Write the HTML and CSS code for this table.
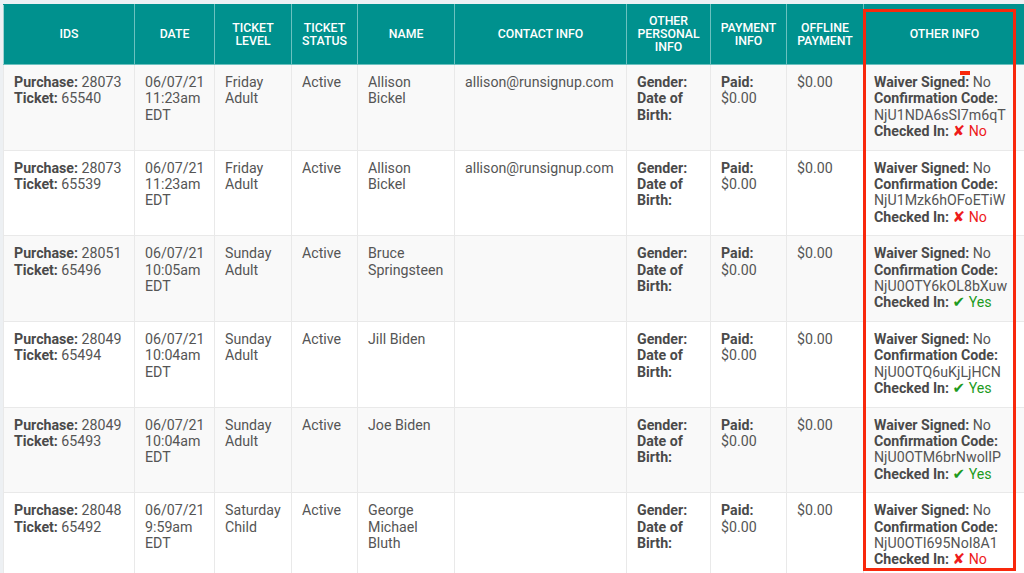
FILE: index.html
```html
<!DOCTYPE html>
<html>
<head>
<meta charset="utf-8">
<link rel="stylesheet" href="styles.css">
</head>
<body>
<div class="page">
<table class="grid">
  <colgroup>
    <col class="c-ids"><col class="c-date"><col class="c-level"><col class="c-status"><col class="c-name"><col class="c-contact"><col class="c-personal"><col class="c-pay"><col class="c-offline"><col class="c-other">
  </colgroup>
  <thead>
    <tr>
      <th>IDS</th><th>DATE</th><th>TICKET LEVEL</th><th>TICKET STATUS</th><th>NAME</th><th>CONTACT INFO</th><th>OTHER PERSONAL INFO</th><th>PAYMENT INFO</th><th>OFFLINE PAYMENT</th><th>OTHER INFO</th>
    </tr>
  </thead>
  <tbody>
    <tr>
      <td><div class="nw"><b>Purchase:</b> 28073</div><div class="nw"><b>Ticket:</b> 65540</div></td>
      <td>06/07/21 11:23am EDT</td>
      <td>Friday Adult</td>
      <td>Active</td>
      <td>Allison Bickel</td>
      <td>allison@runsignup.com</td>
      <td><b>Gender:</b><br><b>Date of Birth:</b></td>
      <td><b>Paid:</b> $0.00</td>
      <td>$0.00</td>
      <td><b>Waiver Signed:</b> No<br><b>Confirmation Code:</b><br>NjU1NDA6sSI7m6qT<br><b>Checked In:</b> <span class="no"><span class="glyph">✘</span> No</span></td>
    </tr>
    <tr>
      <td><div class="nw"><b>Purchase:</b> 28073</div><div class="nw"><b>Ticket:</b> 65539</div></td>
      <td>06/07/21 11:23am EDT</td>
      <td>Friday Adult</td>
      <td>Active</td>
      <td>Allison Bickel</td>
      <td>allison@runsignup.com</td>
      <td><b>Gender:</b><br><b>Date of Birth:</b></td>
      <td><b>Paid:</b> $0.00</td>
      <td>$0.00</td>
      <td><b>Waiver Signed:</b> No<br><b>Confirmation Code:</b><br>NjU1Mzk6hOFoETiW<br><b>Checked In:</b> <span class="no"><span class="glyph">✘</span> No</span></td>
    </tr>
    <tr>
      <td><div class="nw"><b>Purchase:</b> 28051</div><div class="nw"><b>Ticket:</b> 65496</div></td>
      <td>06/07/21 10:05am EDT</td>
      <td>Sunday Adult</td>
      <td>Active</td>
      <td>Bruce Springsteen</td>
      <td></td>
      <td><b>Gender:</b><br><b>Date of Birth:</b></td>
      <td><b>Paid:</b> $0.00</td>
      <td>$0.00</td>
      <td><b>Waiver Signed:</b> No<br><b>Confirmation Code:</b><br>NjU0OTY6kOL8bXuw<br><b>Checked In:</b> <span class="yes"><span class="glyph">✔</span> Yes</span></td>
    </tr>
    <tr>
      <td><div class="nw"><b>Purchase:</b> 28049</div><div class="nw"><b>Ticket:</b> 65494</div></td>
      <td>06/07/21 10:04am EDT</td>
      <td>Sunday Adult</td>
      <td>Active</td>
      <td>Jill Biden</td>
      <td></td>
      <td><b>Gender:</b><br><b>Date of Birth:</b></td>
      <td><b>Paid:</b> $0.00</td>
      <td>$0.00</td>
      <td><b>Waiver Signed:</b> No<br><b>Confirmation Code:</b><br>NjU0OTQ6uKjLjHCN<br><b>Checked In:</b> <span class="yes"><span class="glyph">✔</span> Yes</span></td>
    </tr>
    <tr>
      <td><div class="nw"><b>Purchase:</b> 28049</div><div class="nw"><b>Ticket:</b> 65493</div></td>
      <td>06/07/21 10:04am EDT</td>
      <td>Sunday Adult</td>
      <td>Active</td>
      <td>Joe Biden</td>
      <td></td>
      <td><b>Gender:</b><br><b>Date of Birth:</b></td>
      <td><b>Paid:</b> $0.00</td>
      <td>$0.00</td>
      <td><b>Waiver Signed:</b> No<br><b>Confirmation Code:</b><br>NjU0OTM6brNwolIP<br><b>Checked In:</b> <span class="yes"><span class="glyph">✔</span> Yes</span></td>
    </tr>
    <tr>
      <td><div class="nw"><b>Purchase:</b> 28048</div><div class="nw"><b>Ticket:</b> 65492</div></td>
      <td>06/07/21 9:59am EDT</td>
      <td>Saturday Child</td>
      <td>Active</td>
      <td>George Michael Bluth</td>
      <td></td>
      <td><b>Gender:</b><br><b>Date of Birth:</b></td>
      <td><b>Paid:</b> $0.00</td>
      <td>$0.00</td>
      <td><b>Waiver Signed:</b> No<br><b>Confirmation Code:</b><br>NjU0OTI695NoI8A1<br><b>Checked In:</b> <span class="no"><span class="glyph">✘</span> No</span></td>
    </tr>
  </tbody>
</table>
<div class="highlight"></div>
<div class="marker"></div>
</div>
</body>
</html>
```

FILE: styles.css
```css
html, body {
  margin: 0;
  padding: 0;
  background: #edf0f3;
  overflow: hidden;
}
.page {
  position: relative;
  width: 1024px;
  height: 573px;
  overflow: hidden;
  padding: 4px 0 0 3px;
  box-sizing: border-box;
}
.grid {
  border-collapse: collapse;
  table-layout: fixed;
  width: 1022px;
  font-family: Roboto, "Liberation Sans", sans-serif;
  font-size: 14.2px;
  color: #555;
}
.c-ids { width: 131px; }
.c-date { width: 80px; }
.c-level { width: 77px; }
.c-status { width: 66px; }
.c-name { width: 97px; }
.c-contact { width: 172px; }
.c-personal { width: 84px; }
.c-pay { width: 76px; }
.c-offline { width: 77px; }
.c-other { width: 162px; }

.grid th {
  background: #00918e;
  color: #fff;
  font-size: 12.3px;
  font-weight: 500;
  line-height: 13px;
  height: 39px;
  padding: 10px 5px;
  text-align: center;
  vertical-align: middle;
  border: 1px solid #6cc1bf;
  border-top: 1px solid #00918e;
}
.grid thead th:first-child { border-left-color: #9fd3d2; }
.grid td {
  vertical-align: top;
  text-align: left;
  line-height: 16.4px;
  padding: 9px 10px 10px;
  border: 1px solid #e9e9e9;
  height: 65.5px;
}
.grid tbody tr:nth-child(odd) td { background: #f9f9f9; }
.grid tbody tr:nth-child(even) td { background: #ffffff; }
.grid b { font-weight: 700; color: #4a4a4a; }
.nw { white-space: nowrap; }
.no { color: #ee1b1b; }
.yes { color: #1e9b1e; }
.glyph {
  font-family: "DejaVu Sans", sans-serif;
  font-size: 15px;
  font-weight: 700;
}

.highlight {
  position: absolute;
  left: 863px;
  top: 9px;
  width: 147px;
  height: 556px;
  border: 3px solid #f8280c;
}
.marker {
  position: absolute;
  left: 960px;
  top: 71px;
  width: 10px;
  height: 4px;
  background: #f8280c;
}
```
